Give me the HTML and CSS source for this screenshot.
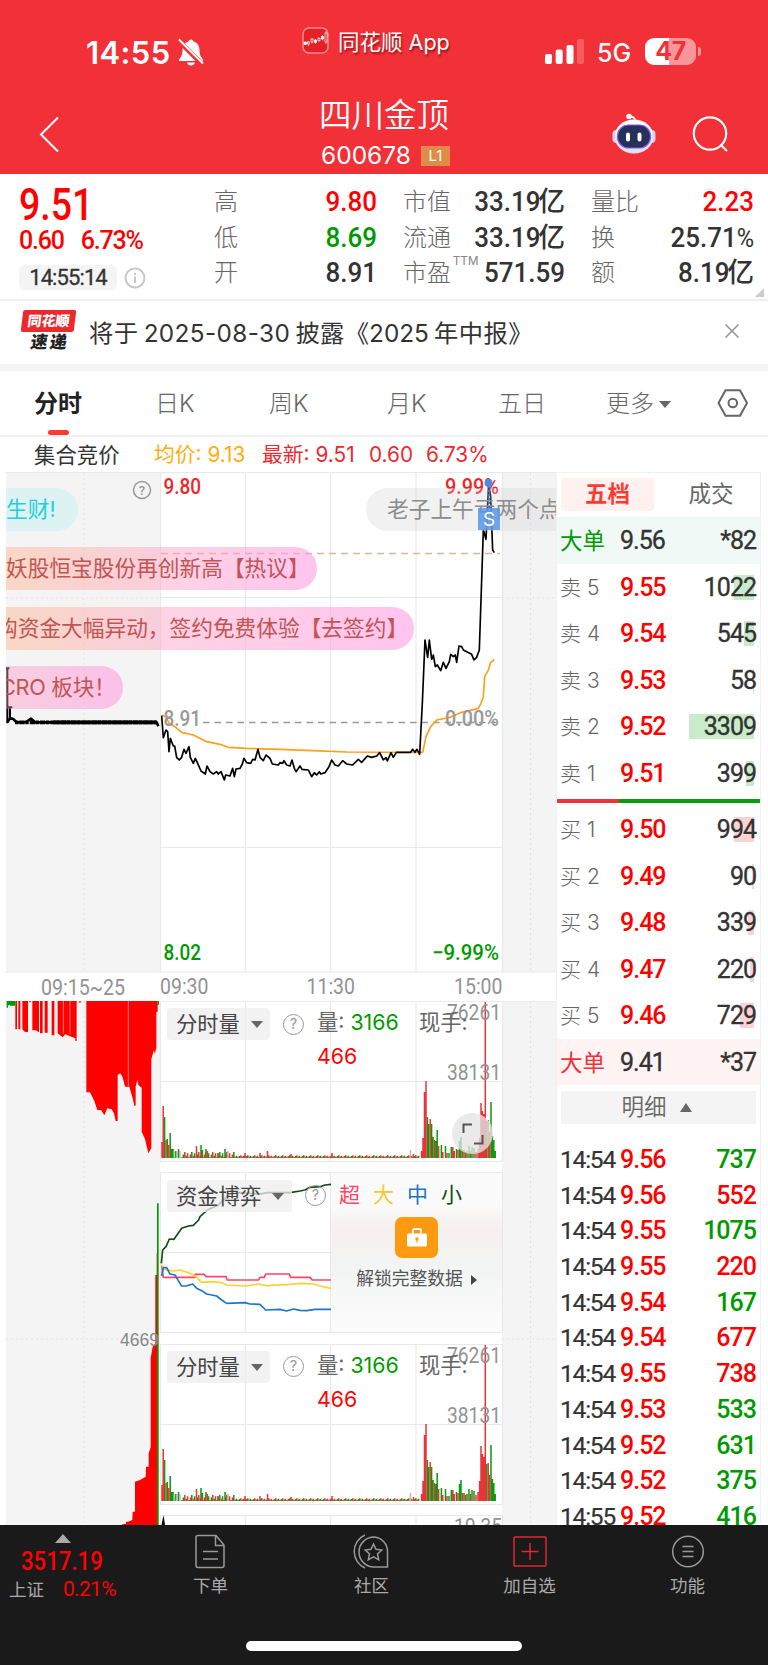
FILE: index.html
```
<!DOCTYPE html>
<html lang="zh-CN">
<head>
<meta charset="utf-8">
<title>四川金顶 600678</title>
<link rel="stylesheet" href="styles.css">
</head>
<body>
<header class="top">
  <div class="status">
    <div class="time">14:55
      <svg class="bell" width="26" height="28" viewBox="0 0 26 28"><path d="M13 1.500c1.600 0 2.300 1 2.400 2C19.500 4.600 21.500 8 21.500 12c0 5 1.500 7 3.500 9.500V23H1v-1.500C3 19 4.500 17 4.500 12c0-4 2-7.400 6.100-8.500.1-1 .8-2 2.400-2z" fill="#fff"/><path d="M9 24.500h8c-.4 1.800-2 3-4 3s-3.600-1.200-4-3z" fill="#fff"/><path d="M-1 1 24 26" stroke="#f23037" stroke-width="5"/><path d="M1 1.500 25 25.500" stroke="#fff" stroke-width="2"/></svg>
    </div>
    <div class="app">
      <svg width="27" height="27" viewBox="0 0 27 27"><rect x="1" y="1" width="25" height="25" rx="6" fill="#e32127" stroke="#f8888c" stroke-width="1.500"/><g stroke="#fff" stroke-width=".7"><path d="M6.500 14v5M10 11v5.500M13.500 12v5M17 10v5M20.500 8v5.500M24 4v13" stroke-width=".6"/><rect x="2" y="15" width="2.500" height="2.500" fill="#fff"/><rect x="5.500" y="15" width="2" height="2" fill="#e32127"/><rect x="9" y="12" width="2" height="3" fill="#e32127"/><rect x="12.500" y="13" width="2" height="2.500" fill="#fff"/><rect x="16" y="11.500" width="2" height="2" fill="#e32127"/><rect x="19.500" y="9.500" width="2" height="2.500" fill="#fff"/><rect x="23" y="6" width="2" height="9" fill="#e32127"/></g></svg>
      <span>同花顺 App</span>
    </div>
    <svg class="signal" width="39" height="25" viewBox="0 0 39 25" fill="#fff"><rect y="15" width="7" height="10" rx="2"/><rect x="10.700" y="10.500" width="7" height="14.500" rx="2"/><rect x="21.500" y="6" width="7" height="19" rx="2"/><rect x="32" width="7" height="25" rx="2" opacity=".22"/></svg>
    <span class="net">5G</span>
    <span class="battery"><b>47</b><i></i></span>
  </div>
  <div class="titlebar">
    <svg class="back" width="21" height="37" viewBox="0 0 21 37"><path d="M19 1.500 2 18.500 19 35.500" fill="none" stroke="#fff" stroke-width="2"/></svg>
    <div class="title"><h1>四川金顶</h1><p>600678<span class="lv">L1</span></p></div>
    <svg class="robot" width="44" height="42" viewBox="0 0 44 42"><path d="M17 4c4-1 6 1 6 4" fill="none" stroke="#fff" stroke-width="2"/><circle cx="17" cy="3.500" r="2.800" fill="#fff"/><rect x=".5" y="17" width="9" height="13" rx="4" fill="#cfcff2"/><rect x="34.500" y="17" width="9" height="13" rx="4" fill="#cfcff2"/><ellipse cx="22" cy="23.500" rx="19.500" ry="17" fill="#e2e2f7"/><ellipse cx="22" cy="20.500" rx="18" ry="13.500" fill="#fff"/><rect x="5.500" y="12" width="33" height="23" rx="11" fill="#25305c" stroke="#8b5be0" stroke-width="1.200"/><rect x="14" y="19.500" width="4" height="9" rx="2" fill="#fff"/><rect x="25.500" y="19.500" width="4" height="9" rx="2" fill="#fff"/></svg>
    <svg class="search" width="37" height="36" viewBox="0 0 37 36" fill="none" stroke="#fff" stroke-width="2.200"><circle cx="18" cy="17.500" r="16.200"/><path d="m28.500 28.500 6.500 6.500"/></svg>
  </div>
</header>

<section class="quote">
  <div class="last">
    <div class="price">9.51</div>
    <div class="chg"><span>0.60</span><span>6.73%</span></div>
    <div class="stamp"><span>14:55:14</span><svg width="22" height="22" viewBox="0 0 22 22" fill="none" stroke="#c8c8c8" stroke-width="2"><circle cx="11" cy="11" r="9.500"/><path d="M11 9.500V16M11 6v2"/></svg></div>
  </div>
  <dl><dt>高</dt><dd class="red">9.80</dd><dt>低</dt><dd class="green">8.69</dd><dt>开</dt><dd>8.91</dd></dl>
  <dl class="mid"><dt>市值</dt><dd>33.19<em>亿</em></dd><dt>流通</dt><dd>33.19<em>亿</em></dd><dt>市盈<sup>TTM</sup></dt><dd>571.59</dd></dl>
  <dl class="end"><dt>量比</dt><dd class="red">2.23</dd><dt>换</dt><dd>25.71<small>%</small></dd><dt>额</dt><dd>8.19<em>亿</em></dd></dl>
  <i class="corner"></i>
</section>

<section class="news">
  <div class="logo"><b>同花顺</b><i>速 递</i></div>
  <p>将于 <span>2025-08-30</span> 披露<span class="bk">《2025</span> 年中报》</p>
  <svg width="16" height="16" viewBox="0 0 16 16"><path d="m1.500 1.500 13 13m0-13-13 13" stroke="#999" stroke-width="1.700"/></svg>
</section>

<nav class="tabs">
  <span class="on">分时</span><span>日K</span><span>周K</span><span>月K</span><span>五日</span><span>更多<i class="dn"></i></span>
  <svg width="32" height="28" viewBox="0 0 32 28" fill="none" stroke="#666" stroke-width="2"><path d="M8.500 1.200h14.500L30 14l-7 12.800H8.500L1.500 14z" stroke-linejoin="round"/><circle cx="15.800" cy="14" r="4.300"/></svg>
</nav>
<div class="legend"><span>集合竞价</span><span class="avg">均价: 9.13</span><span>最新: 9.51</span><span>0.60</span><span>6.73%</span></div>

<main class="main">
  <div class="charts">
    <svg id="chart" width="550" height="1053" viewBox="6 472 550 1053" font-family="Roboto, sans-serif" font-weight="500">
      <rect x="6" y="472" width="154" height="500" fill="#f4f4f4"/>
      <rect x="502" y="472" width="54" height="500" fill="#f4f4f4"/>
      <rect x="6" y="1001" width="154" height="524" fill="#f4f4f4"/>
      <rect x="502" y="1001" width="54" height="524" fill="#f4f4f4"/>
      <g stroke="#e4e4e4" stroke-dasharray="2 3"><path d="M84 473v498M84 1001v524M530.500 473v498M530.500 1001v524M6 598h154M502 598h54M6 1339h154M502 1339h54"/></g>
      <g stroke="#e9e9e9" fill="none" stroke-width="1.200">
        <path d="M6 472.500h550M160.500 472v500M245.500 472v500M330.500 472v500M416 472v500M502.500 472v500M160 597.500h342M160 847.500h342M6 972h550"/>
        <path id="pane" d="M160 1001.500h342.500v160H160.500v-160M160 1081.500h342M245.500 1001v160M330.500 1001v160M416 1001v160"/>
        <use href="#pane" y="171"/><use href="#pane" y="343"/><use href="#pane" y="514"/>
      </g>
      <path d="M6 1001.500h550" stroke="#ececec"/>
      <path d="M161 553.500h339" stroke="#d9bc94" stroke-dasharray="7 5" stroke-width="1.300"/>
      <path d="M203 722.500h295" stroke="#999" stroke-dasharray="6.500 5" stroke-width="1.300"/>

      <g transform="translate(0 470) scale(.33333)" fill="none" stroke-linejoin="round">
        <path d="M22 592v168M30 712v34l8 0M19 712h18M18 595h10" stroke="#000" stroke-width="6"/>
        <path d="M22 757l8-12 10 2 10 10 28-1 15-10 12 11h365l5 12" stroke="#000" stroke-width="8"/>
        <path d="M45 757h425" stroke="#000" stroke-width="11" stroke-dasharray="10 3 16 2"/>
        <path d="M160 757h310" stroke="#000" stroke-width="11"/>
        <path d="M487 735 497 740 508 760 525 770 545 787 580 795 620 815 660 823 685 832 740 835 840 838 940 842 1040 846 1268 847 1274 820 1278 800 1292 770 1310 750 1350 742 1385 727 1435 715 1443 700 1450 680 1454 620 1466 598 1472 577 1483 568" stroke="#ff9f1c" stroke-width="5"/>
        <path d="M485 737 490 803 498 780 503 785 507 845 511 805 520 828 524 828 530 863 538 870 545 862 552 838 558 850 567 830 571 862 580 880 586 865 593 880 603 903 616 912 621 888 630 905 640 912 650 905 655 912 663 905 673 930 677 915 690 918 698 895 703 920 708 897 720 895 727 882 732 865 740 878 752 880 758 868 765 870 774 838 780 862 790 872 798 855 810 865 817 882 835 885 840 878 848 880 852 872 860 885 870 888 876 870 883 895 888 905 900 888 906 898 925 900 935 920 943 908 950 915 958 905 962 912 975 908 987 890 995 870 1005 885 1015 888 1028 872 1040 882 1058 885 1075 868 1085 877 1102 858 1115 862 1130 858 1139 848 1150 870 1158 863 1162 873 1173 848 1180 862 1189 847 1232 847 1238 838 1245 847 1251 838 1259 853 1267 700 1275 510 1283 562 1288 510 1295 568 1300 555 1306 590 1312 585 1322 602 1330 577 1338 595 1348 575 1352 553 1360 560 1366 555 1370 577 1377 528 1385 530 1390 540 1400 545 1415 553 1422 570 1430 562 1438 540 1445 330 1450 180 1458 208 1466 40 1472 80 1478 240 1483 248" stroke="#000" stroke-width="5"/>
      </g>
      <g fill="none" stroke="#999" stroke-width="1.500"><circle cx="142" cy="490" r="8.500"/></g>
      <text x="142" y="495" font-size="13" fill="#999" text-anchor="middle">?</text>
      <g font-size="21.500">
        <text x="163.500" y="493.500" fill="#ee262b" textLength="37.500" lengthAdjust="spacingAndGlyphs">9.80</text><text x="445" y="493.500" fill="#ee262b" textLength="54" lengthAdjust="spacingAndGlyphs">9.99%</text>
        <text x="163.500" y="726" fill="#999" textLength="37.500" lengthAdjust="spacingAndGlyphs">8.91</text><text x="445" y="726" fill="#999" textLength="54" lengthAdjust="spacingAndGlyphs">0.00%</text>
        <text x="163.500" y="959.500" fill="#009a00" textLength="37.500" lengthAdjust="spacingAndGlyphs">8.02</text><text x="432" y="959.500" fill="#009a00" textLength="67" lengthAdjust="spacingAndGlyphs">−9.99%</text>
      </g>
      <g font-size="21.500" fill="#929292" font-weight="400">
        <text x="41" y="994.500" textLength="84" lengthAdjust="spacingAndGlyphs">09:15~25</text><text x="160" y="994" textLength="48.500" lengthAdjust="spacingAndGlyphs">09:30</text><text x="306.500" y="994" textLength="48.500" lengthAdjust="spacingAndGlyphs">11:30</text><text x="454" y="994" textLength="48.500" lengthAdjust="spacingAndGlyphs">15:00</text>
      </g>

      <g transform="translate(0 940) scale(.33333)" fill="#f00">
        <path d="M46 183h5v85h-5zM55 183h6v85h-6zM67 183h17v94l-10-2-7-7zM97 183h20v94l-10-6h-10zM120 183h8v97h-8zM134 183h9v95h-9zM155 183h8v103h-8zM173 183h57v120h-4v-8l-16-6-14-6-8 9-15-12zM88 183h4v4h-4zM238 183h4v5h-4z"/>
        <path d="M259 183V457H270L283 483 292 510H303L313 526 322 505 335 508 342 520 347 543H353V405L361 400 368 412 375 440H388L398 475 403 497H407V440L412 420 415 435 425 443V575L435 597 445 640 454 625V357L462 330 464 343 469 323V215H473V183z"/>
        <path d="M385 183v256M190 183v98M210 183v100" stroke="#ffb0b0" stroke-width="2"/>
        <path d="M20 183h26v14H30v-3l-6 3v6h-4zM473 183h4v12h-4z" fill="#009a00"/>
      </g>
      <g transform="translate(0 1170) scale(.33333)">
        <path d="M367 1066V1062H378V1055H384L397 1050 398 1025H405V935L420 930 437 920 438 890H446V850L452 832V565L458 530 466 520V315H470V250H473V1066z" fill="#f00"/>
        <path d="M471 100h5v966h-5z" fill="#009a00"/>
      </g>
      <text x="120" y="1345.500" font-family="Liberation Sans, sans-serif" font-size="17.500" font-weight="400" fill="#888">4669</text>

      <g id="volume" stroke-width="1.500">
        <path id="vg" fill="none" stroke="#0b9b0b"/><path id="vr" fill="none" stroke="#ea3338"/><path id="vn" fill="none" stroke="#bbb"/>
      </g>
      <use href="#volume" y="343"/>
      <g font-size="21.500" font-weight="400" fill="#929292">
        <text x="447" y="1020" textLength="54" lengthAdjust="spacingAndGlyphs">76261</text><text x="447" y="1080" textLength="54" lengthAdjust="spacingAndGlyphs">38131</text>
        <text x="447" y="1363" textLength="54" lengthAdjust="spacingAndGlyphs">76261</text><text x="447" y="1423" textLength="54" lengthAdjust="spacingAndGlyphs">38131</text>
        <text x="454" y="1534" textLength="48" lengthAdjust="spacingAndGlyphs">10.35</text>
      </g>
      <path d="m161.500 1525 2-10 1.500 10z"/>
      <g transform="translate(0 1170) scale(.33333)" fill="none" stroke-width="5" stroke-linejoin="round">
        <path stroke="#114d11" d="M484 280 488 240 498 230 508 207 522 208 533 192 545 175 565 168 580 166 596 150 600 140 622 120 655 105 680 80 690 72 720 68 780 72 800 68 870 68 900 63 915 60 930 52 960 50 975 45 993 43"/>
        <path stroke="#fb4668" d="M485 285 490 322 585 322 585 313 612 313 618 320 678 320 682 330 775 330 780 322 793 322 797 312 868 312 872 322 930 322 937 330 993 330"/>
        <path stroke="#ffd02f" d="M485 285 492 298 520 303 540 300 565 308 590 320 603 337 640 335 665 338 680 345 740 348 775 342 800 347 870 343 900 340 940 342 960 348 993 355"/>
        <path stroke="#1c75c8" d="M485 318 490 293 500 293 510 312 525 315 535 332 545 348 558 348 578 342 590 355 605 362 620 372 650 378 665 390 680 400 735 398 750 402 780 403 797 420 840 418 860 423 880 417 900 421 920 422 945 418 993 418"/>
      </g>
    </svg>

    <div class="lock">
      <p class="kinds"><span>超</span><span>大</span><span>中</span><span>小</span></p>
      <div class="lockbox"><svg width="20" height="19" viewBox="0 0 20 19"><path d="M6 7V2.500Q6 1 7.500 1h5Q14 1 14 2.500V7" fill="none" stroke="#fff" stroke-width="1.800"/><rect y="5.500" width="20" height="13" rx="1.500" fill="#fff"/><path d="M8.500 9.500h3v3H10.500v2.500h-1v-2.500h-1z" fill="#ff9a10"/></svg></div>
      <p class="unlock">解锁完整数据<i></i></p>
    </div>

    <div class="bubble b1">生财!</div>
    <div class="bubble b2">妖股恒宝股份再创新高【热议】</div>
    <div class="bubble b3"><span>购资金大幅异动，签约免费体验【去签约】</span></div>
    <div class="bubble b4"><span>CRO 板块！</span></div>
    <div class="bubble b5">老子上午亏两个点</div>
    <svg class="mark" width="22" height="54" viewBox="0 0 22 54"><path d="M11 4v28" stroke="#2d7de0" stroke-width="2" stroke-dasharray="2 2"/><circle cx="10.500" cy="5" r="4" fill="#4a8de0"/><rect y="30" width="22" height="22" fill="#5c98e6" opacity=".88"/><text x="11" y="48" fill="#fff" font-size="19" font-family="Inter, sans-serif" text-anchor="middle">S</text></svg>

    <div class="chip c1">分时量<i class="dn"></i></div>
    <div class="chip c2">资金博弈<i class="dn"></i></div>
    <div class="chip c3">分时量<i class="dn"></i></div>
    <span class="q q1">?</span><span class="q q2">?</span><span class="q q3">?</span>
    <p class="vol v1"><span>量: <b>3166</b></span><span>现手:</span><em>466</em></p>
    <p class="vol v3"><span>量: <b>3166</b></span><span>现手:</span><em>466</em></p>
    <div class="full"><svg width="22" height="22" viewBox="0 0 22 22" fill="none" stroke="#555" stroke-width="2"><path d="M1.500 10V1.500H10M20.500 12v8.500H12"/></svg></div>
  </div>

  <aside class="book">
    <div class="btabs"><b>五档</b><span>成交</span></div>
    <div class="row big sell"><span>大单</span><b>9.56</b><i>*82</i></div>
    <div class="row s"><span>卖 5</span><b>9.55</b><i>1022</i><u style="width:20px"></u></div>
    <div class="row s"><span>卖 4</span><b>9.54</b><i>545</i><u style="width:10.500px"></u></div>
    <div class="row s"><span>卖 3</span><b>9.53</b><i>58</i><u style="width:1px"></u></div>
    <div class="row s"><span>卖 2</span><b>9.52</b><i>3309</i><u style="width:65px"></u></div>
    <div class="row s"><span>卖 1</span><b>9.51</b><i>399</i><u style="width:8px"></u></div>
    <div class="ratio"></div>
    <div class="row"><span>买 1</span><b>9.50</b><i>994</i><u style="width:20px"></u></div>
    <div class="row"><span>买 2</span><b>9.49</b><i>90</i><u style="width:2px"></u></div>
    <div class="row"><span>买 3</span><b>9.48</b><i>339</i><u style="width:6.500px"></u></div>
    <div class="row"><span>买 4</span><b>9.47</b><i>220</i><u style="width:4px"></u></div>
    <div class="row"><span>买 5</span><b>9.46</b><i>729</i><u style="width:14px"></u></div>
    <div class="row big buy"><span>大单</span><b>9.41</b><i>*37</i></div>
    <div class="detail">明细<i></i></div>
    <div class="ticks">
      <p><span>14:54</span><b>9.56</b><i class="green">737</i></p>
      <p><span>14:54</span><b>9.56</b><i class="red">552</i></p>
      <p><span>14:54</span><b>9.55</b><i class="green">1075</i></p>
      <p><span>14:54</span><b>9.55</b><i class="red">220</i></p>
      <p><span>14:54</span><b>9.54</b><i class="green">167</i></p>
      <p><span>14:54</span><b>9.54</b><i class="red">677</i></p>
      <p><span>14:54</span><b>9.55</b><i class="red">738</i></p>
      <p><span>14:54</span><b>9.53</b><i class="green">533</i></p>
      <p><span>14:54</span><b>9.52</b><i class="green">631</i></p>
      <p><span>14:54</span><b>9.52</b><i class="green">375</i></p>
      <p><span>14:55</span><b>9.52</b><i class="green">416</i></p>
    </div>
  </aside>
</main>

<footer class="bottom">
  <div class="index"><i></i><strong>3517.19</strong><p>上证<b>0.21%</b></p></div>
  <div class="item"><svg width="34" height="36" viewBox="0 0 34 36"><path d="M4 1.500h18l8 9.500v20.500q0 2-2 2H4q-2 0-2-2v-28q0-2 2-2zM21.500 2v9.500H30M9 17.500h15M9 25h15"/></svg>下单</div>
  <div class="item"><svg width="38" height="36" viewBox="0 0 38 36"><path d="M21 3a15 15 0 1 0 0 30h13.500V18A14.500 14.500 0 0 0 21 3zM12 1a18 18 0 0 0 0 33"/><path d="m20.500 10 2.500 5.300 5.800.7-4.300 4 1.200 5.800-5.200-2.900-5.200 2.900 1.200-5.800-4.300-4 5.800-.7z"/></svg>社区</div>
  <div class="item"><svg class="add" width="36" height="36" viewBox="0 0 36 36"><rect x="2" y="3" width="32" height="29" rx="1"/><path d="M18 9v17M9.500 17.500h17"/></svg>加自选</div>
  <div class="item"><svg width="36" height="36" viewBox="0 0 36 36"><circle cx="18" cy="17.500" r="15.300"/><path d="M12.500 12.500h11M12.500 17.500h11M12.500 22.500h11"/></svg>功能</div>
  <div class="home"></div>
</footer>
<script src="chart.js"></script>
</body>
</html>
```
FILE: styles.css
```
* { box-sizing: border-box; }
body, h1, p, dl, dt, dd { margin: 0; font-weight: 400; }
body { width: 768px; height: 1665px; overflow: hidden; background: #fff; color: #333; font-family: Inter, "Noto Sans CJK SC", sans-serif; }
i, em { font-style: normal; }
svg { display: block; flex: none; }
.red { color: #f00; }
.green { color: #009a00; }

.top { height: 174px; background: #f23037; color: #fff; }
.status { height: 82px; display: grid; grid-template-columns: 86px 216px 243px 52px 48px 60px; }
.time { grid-column: 2; display: flex; gap: 7px; align-items: flex-start; font-size: 31px; font-weight: 600; line-height: 36px; padding-top: 35px; letter-spacing: .4px; }
.bell { margin-top: 3px; }
.app { display: flex; gap: 9px; height: 28px; margin-top: 26px; align-items: center; font-size: 21.500px; white-space: nowrap; text-shadow: 1px 2px 2px rgba(90,0,0,.6); }
.signal { margin-top: 39px; }
.net { font-size: 25px; font-weight: 500; line-height: 30px; margin-top: 38px; }
.battery { width: 51px; height: 27px; margin-top: 38px; border-radius: 9px; background: linear-gradient(90deg, #fff 47%, #f8979b 47%); color: #f23037; text-align: center; line-height: 27px; font-size: 25px; position: relative; }
.battery b { font-weight: 700; letter-spacing: -.5px; }
.battery i { position: absolute; right: -5px; top: 9px; width: 3px; height: 9px; border-radius: 0 4px 4px 0; background: #f8979b; }
.titlebar { display: grid; grid-template-columns: 39px 200px 290px 83px 80px 40px; }
.back { grid-column: 2; margin-top: 34px; }
.title { text-align: center; }
.title h1 { font-size: 32.500px; line-height: 40px; padding-top: 14px; font-weight: 350; }
.title p { font-size: 24.500px; line-height: 28px; margin-top: 5px; display: flex; justify-content: center; padding-left: 3px; }
.lv { background: #e08c48; width: 29px; height: 20px; font-size: 15px; line-height: 20px; margin: 5px 0 0 10px; }
.robot { grid-column: 5; margin-top: 31px; }
.search { grid-column: 6; margin-top: 34px; }

.quote { height: 127px; display: grid; grid-template-columns: 195px 163px 26px 1fr 26px 163px 14px; padding-left: 19px; border-bottom: 2px solid #f1f1f1; position: relative; font-family: Roboto, "Noto Sans CJK SC", sans-serif; }
.last { font-weight: 500; color: #f00; }
.price { font-size: 43.500px; line-height: 46px; transform: scaleX(.86); transform-origin: left; padding-top: 9px; }
.chg { font-size: 25px; line-height: 26px; display: flex; gap: 17px; letter-spacing: -1.200px; margin-top: -1px; }
.stamp { display: flex; gap: 7px; align-items: center; margin-top: 11px; }
.stamp span { background: #f4f4f4; color: #333; border-radius: 6px; width: 98px; height: 25px; line-height: 25px; font-size: 22px; text-align: center; letter-spacing: -.9px; font-weight: 400; -webkit-text-stroke: .3px #333; }
.quote dl { display: grid; grid-template-columns: auto 1fr; grid-auto-rows: 35.600px; align-content: start; padding-top: 10px; line-height: 36px; }
.quote .mid { grid-column: 4; }
.quote .end { grid-column: 6; }
.quote dt { font-size: 24px; color: #666; font-weight: 300; white-space: nowrap; }
.quote dd { font-size: 28.500px; font-weight: 500; text-align: right; white-space: nowrap; transform: scaleX(.91); transform-origin: right; }
.quote dd em { font-size: 27px; font-weight: 500; display: inline-block; transform: scaleX(1.09); transform-origin: right; }
.quote dd small { font-size: 26px; font-weight: 400; }
.quote sup { font-size: 12px; line-height: 0; position: absolute; top: 87px; margin-left: 2px; color: #888; font-weight: 400; letter-spacing: .3px; }
.corner { position: absolute; right: 4px; bottom: 2px; border: solid transparent; border-width: 0 0 9px 9px; border-bottom-color: #ccc; }

.news { height: 70px; display: flex; align-items: center; padding: 0 28px 3px 22px; border-bottom: 7px solid #f4f4f4; }
.logo { width: 53px; margin-right: 14px; text-align: center; line-height: 1; font-weight: 900; }
.logo b { display: block; transform: skewX(-7deg); background: #ec2a2e; color: #fff; border-radius: 2px; font-size: 14px; line-height: 22px; height: 22px; font-weight: 900; }
.logo i { display: block; font-size: 17px; line-height: 21px; transform: skewX(-9deg); color: #222; white-space: nowrap; letter-spacing: -.5px; }
.news p { flex: 1; font-size: 24.300px; white-space: nowrap; letter-spacing: .4px; word-spacing: -2px; }
.news .bk { letter-spacing: 0; }

.tabs { height: 66px; display: grid; grid-template-columns: 121px 114px 118px 111px 108px 109px 40px; padding-left: 34px; border-bottom: 2px solid #f1f1f1; font-size: 24px; line-height: 66px; color: #666; font-weight: 300; white-space: nowrap; }
.tabs > svg { margin-top: 18px; margin-left: 2px; }
.on { color: #222; font-weight: 700; position: relative; }
.on::after { content: ""; position: absolute; left: 14px; top: 59px; width: 21px; height: 5px; border-radius: 3px; background: #ff3a30; }
.dn { display: inline-block; border: 6px solid transparent; border-top: 7px solid #666; border-bottom: 0; margin-left: 5px; vertical-align: 4px; }
.legend { height: 35px; display: grid; grid-template-columns: 120px 108px 107px 57px 80px; padding-left: 34px; line-height: 36px; font-size: 21px; color: #ee2a2e; white-space: nowrap; }
.legend span { font-size: 20.800px; }
.legend span:first-child { color: #333; font-size: 21.400px; }
.legend .avg { color: #ffae0d; }

.main { display: flex; height: 1053px; padding-left: 6px; overflow: hidden; }
.charts { width: 550px; height: 1053px; position: relative; overflow: hidden; flex: none; }
.bubble { position: absolute; left: 0; height: 43px; line-height: 43px; font-size: 21.700px; white-space: nowrap; overflow: hidden; border-radius: 0 22px 22px 0; color: #c25454; }
.b1 { top: 16px; width: 72px; color: #22cfdc; background: rgba(205,240,240,.6); }
.b2 { top: 75px; width: 311px; background: linear-gradient(90deg, rgba(253,196,165,.6), rgba(255,150,190,.42) 52%, rgba(255,160,228,.62)); }
.b3 { top: 135px; width: 408px; background: linear-gradient(90deg, rgba(253,196,165,.6), rgba(255,150,190,.42) 40%, rgba(255,160,228,.62)); }
.b3 span { margin-left: -10px; }
.b4 { top: 194px; width: 117px; background: linear-gradient(90deg, rgba(255,150,190,.4), rgba(255,160,228,.62)); }
.b4 span { margin-left: -6px; letter-spacing: -.3px; }
.b5 { left: 360px; top: 16px; width: 190px; border-radius: 22px 0 0 22px; padding-left: 21px; color: #8c8c8c; background: rgba(205,205,205,.28); }
.mark { position: absolute; left: 472px; top: 6px; }
.chip { position: absolute; left: 161px; width: 103px; height: 32px; border-radius: 4px; background: rgba(238,238,238,.75); font-size: 21.300px; line-height: 32px; padding-left: 9px; color: #444; white-space: nowrap; }
.chip .dn { margin-left: 11px; }
.c1 { top: 536px; } .c2 { top: 708px; width: 125px; } .c3 { top: 879px; }
.q { position: absolute; width: 21px; height: 21px; border: 1.500px solid #999; border-radius: 50%; color: #999; font-size: 14.500px; line-height: 18px; text-align: center; }
.q1 { left: 277px; top: 542px; } .q2 { left: 299px; top: 713px; } .q3 { left: 277px; top: 884px; }
.vol { position: absolute; left: 311px; display: grid; grid-template-columns: 102px 60px; font-size: 21.300px; line-height: 34px; color: #666; white-space: nowrap; }
.vol b { color: #009a00; font-weight: 400; }
.vol em { color: #f00; }
.v1 { top: 533px; } .v3 { top: 876px; }
.full { position: absolute; left: 446px; top: 641px; width: 41px; height: 41px; border-radius: 50%; background: rgba(228,228,228,.78); display: grid; place-items: center; }
.lock { position: absolute; left: 325px; top: 701px; width: 171px; height: 159px; background: linear-gradient(#fafafa 20%, #f7efef 35%, #f5f1f1 46%, #f1f4f3 55%, #f8f8f8 80%, #fbfbfb); display: flex; flex-direction: column; align-items: center; }
.kinds { display: grid; grid-template-columns: repeat(4, 34px); align-self: flex-start; padding-left: 8px; font-size: 21px; line-height: 44px; }
.kinds span:nth-child(1) { color: #fb4668; } .kinds span:nth-child(2) { color: #f8c72c; } .kinds span:nth-child(3) { color: #1c75c8; } .kinds span:nth-child(4) { color: #114d11; }
.lockbox { width: 43px; height: 41px; border-radius: 7px; background: #ff9a10; display: grid; place-items: center; }
.unlock { font-size: 17.800px; color: #555; line-height: 42px; white-space: nowrap; }
.unlock i { display: inline-block; border: 5px solid transparent; border-left: 6px solid #444; border-right: 0; margin-left: 8px; }

.book { width: 205px; border: solid #f1f1f1; border-width: 1px 1px 0; font-family: Roboto, "Noto Sans CJK SC", sans-serif; }
.btabs { height: 44px; display: grid; grid-template-columns: 93px 1fr; padding: 5px 0 6px 4px; font-size: 22.500px; line-height: 33px; color: #666; text-align: center; }
.btabs b { background: #fff1f0; color: #ff3a30; border-radius: 3px; }
.btabs span { padding-left: 8px; }
.row { height: 46.500px; display: grid; grid-template-columns: 60px 60px 1fr; padding: 0 4px 0 3px; line-height: 47px; position: relative; white-space: nowrap; }
.row span { font-size: 21px; color: #666; font-weight: 300; font-family: Inter, "Noto Sans CJK SC", sans-serif; }
.row b, .row i, .ticks b, .ticks i { font-size: 25px; font-weight: 500; letter-spacing: -1px; }
.row b, .ticks b { color: #f00; }
.row i, .ticks i { text-align: right; position: relative; z-index: 1; }
.row i { font-weight: 400; -webkit-text-stroke: .35px #333; }
.row u { position: absolute; right: 6px; top: 11px; height: 25px; background: #fcd2d4; }
.s u { background: #c9ebc9; }
.row.big b { color: #333; font-weight: 400; -webkit-text-stroke: .35px #333; }
.row.big span { font-size: 22.500px; font-weight: 400; }
.sell { background: #f1f9f6; } .row.sell span { color: #009a00; }
.buy { background: #fff3f3; } .row.buy span { color: #f23037; }
.ratio { height: 4px; margin: 3px 0; background: linear-gradient(90deg, #ee3338 62px, #0a9a0a 62px); }
.detail { margin: 6px 4px 0; height: 33px; background: #f4f4f4; color: #666; font-size: 22.500px; line-height: 33px; text-align: center; padding-right: 4px; font-weight: 350; }
.detail i { display: inline-block; border: 6px solid transparent; border-bottom: 9px solid #666; border-top: 0; margin-left: 13px; vertical-align: 3px; }
.ticks { padding: 18px 4px 0 3px; }
.ticks p { display: grid; grid-template-columns: 60px 60px 1fr; height: 35.700px; line-height: 35.700px; }
.ticks span { font-size: 24.500px; letter-spacing: -1.200px; -webkit-text-stroke: .2px #333; }

.bottom { position: relative; height: 140px; background: #1a1a1a; color: #aaa; display: grid; grid-template-columns: 131px 159px 163px 153px 163px; }
.index { padding-left: 9px; color: #f00; font-family: Roboto, "Noto Sans CJK SC", sans-serif; }
.index i { display: block; margin: 9px 0 0 46px; width: 16px; border: 8px solid transparent; border-bottom: 9px solid #aaa; border-top: 0; }
.index strong { display: block; font-size: 25.500px; line-height: 30px; font-weight: 500; margin: 3px 0 0 12px; transform: scaleX(.87); transform-origin: left; }
.index p { font-size: 17.500px; color: #aaa; line-height: 22px; margin-top: 2px; white-space: nowrap; }
.index b { color: #f00; font-size: 21px; font-weight: 400; margin-left: 19px; letter-spacing: -.7px; }
.item { display: flex; flex-direction: column; align-items: center; font-size: 17.500px; line-height: 26px; padding-top: 9px; gap: 3px; }
.item svg { fill: none; stroke: #999; stroke-width: 1.500; }
.item .add { stroke: #e0292e; }
.home { position: absolute; left: 246px; top: 116px; width: 276px; height: 10px; border-radius: 5px; background: #fff; }
```
FILE: chart.js
```
// Minute volume bars: [x, height, colour]; r = up, g = down, n = flat.
var bars = [
  [162, 16, 'r'], [163.2, 52, 'r'], [164.6, 41, 'g'], [166, 18, 'r'], [167.3, 19, 'g'], [168.8, 13, 'r'], [170.2, 25, 'g'], [171.6, 9, 'g'],
  [173, 9, 'g'], [174.4, 6, 'n'], [175.8, 7, 'g'], [177.2, 7, 'n'], [178.6, 9, 'g'], [180, 7, 'n'], [196.5, 12, 'r'], [201, 13, 'g'], [202.4, 8, 'g'],
  [206, 9, 'g'], [207.4, 7, 'r'], [218, 5, 'g'], [225, 9, 'g'], [228, 7, 'n'], [245, 5, 'r'], [260, 5, 'r'], [267.5, 7, 'r'], [291, 4, 'r'], [332, 5, 'r'],
  [410.5, 8, 'n'], [413.5, 4, 'r'],
  [421.5, 7, 'r'], [423, 20, 'r'], [424.5, 66, 'r'], [426, 77, 'r'], [427.4, 41, 'g'], [428.8, 34, 'g'], [430.2, 39, 'r'], [431.6, 34, 'g'],
  [433, 21, 'g'], [434.4, 18, 'r'], [435.8, 17, 'g'], [437.2, 28, 'g'], [438.6, 12, 'r'], [440, 8, 'n'], [441.4, 13, 'g'], [442.8, 6, 'r'],
  [445.5, 12, 'g'], [447, 5, 'r'], [449, 5, 'g'], [451.3, 11, 'g'], [452.8, 11, 'r'], [454.3, 7, 'r'], [456.5, 9, 'g'], [458, 8, 'r'],
  [459.5, 17, 'g'], [461, 21, 'g'], [462.5, 8, 'r'], [464, 8, 'g'], [465.5, 6, 'r'], [467, 7, 'g'], [469, 12, 'g'], [470.5, 7, 'r'], [472, 11, 'g'],
  [474, 10, 'g'], [476, 6, 'r'], [478, 9, 'r'], [479.6, 20, 'r'], [481, 55, 'r'], [482.4, 47, 'r'], [483.8, 44, 'r'], [485.3, 156, 'r'],
  [486.8, 37, 'g'], [488.2, 38, 'r'], [489.6, 26, 'r'], [491, 56, 'g'], [492.4, 22, 'g'], [493.8, 18, 'g'], [495.2, 7, 'g']
];
var kinds = ['r', 'g', 'g', 'r', 'n', 'g', 'r'];
for (var i = 0; i < 170; i++) {
  var x = 182 + i * 1.4;
  var h = 1 + (i * 7 % 5) * (x < 235 ? 1.25 : 0.45);
  bars.push([x, h, kinds[(i * 5 + (i >> 2)) % 7]]);
}
['r', 'g', 'n'].forEach(function (kind) {
  var d = bars.filter(function (b) { return b[2] === kind; })
    .map(function (b) { return 'M' + b[0] + ' 1158v-' + b[1]; }).join('');
  document.getElementById('v' + kind).setAttribute('d', d);
});
```
